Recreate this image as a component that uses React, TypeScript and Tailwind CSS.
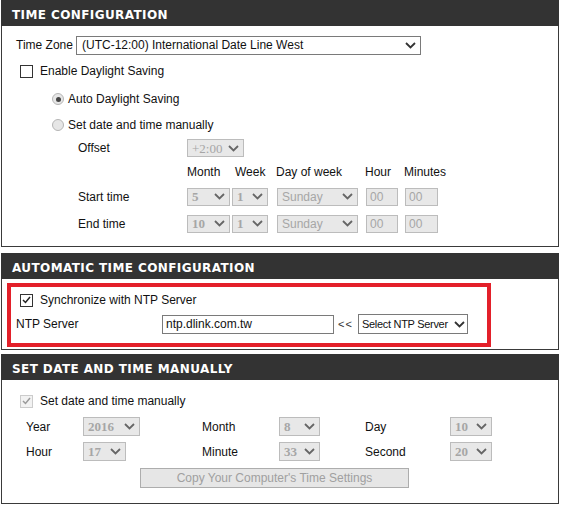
import React from "react";

const Chevron = ({ color = "#333333" }: { color?: string }) => (
  <svg width="11" height="7" viewBox="0 0 11 7" className="shrink-0">
    <path d="M1 1 L5.5 5.5 L10 1" stroke={color} strokeWidth="1.8" fill="none" />
  </svg>
);

const Panel = ({
  title,
  bodyClass,
  children,
}: {
  title: string;
  bodyClass: string;
  children: React.ReactNode;
}) => (
  <div className="ml-[1px] w-[558px]">
    <div className="flex h-[26px] items-center bg-[#333333] pl-[11px] pt-[3px] font-['DejaVu_Sans',sans-serif] text-[12px] font-bold tracking-[0.4px] text-white">
      {title}
    </div>
    <div className={"border-x border-b border-[#3a3a3a] bg-white " + bodyClass}>{children}</div>
  </div>
);

const DisSelect = ({
  value,
  className,
  serif = true,
  bold = true,
}: {
  value: string;
  className: string;
  serif?: boolean;
  bold?: boolean;
}) => (
  <div
    className={
      "flex items-center justify-between border border-[#bcbcbc] bg-[#e8e8e8] pl-[4px] pr-[4px] text-[#a6a6a6] " +
      (serif ? "font-['Liberation_Serif',serif] text-[13px] " : "text-[12px] ") +
      (bold ? "font-bold " : "") +
      className
    }
  >
    <span className="leading-none">{value}</span>
    <Chevron color="#666666" />
  </div>
);

const DisInput = ({ value, className }: { value: string; className: string }) => (
  <div
    className={
      "flex items-center border border-[#bcbcbc] bg-[#e8e8e8] pl-[3px] text-[12px] text-[#a6a6a6] " + className
    }
  >
    {value}
  </div>
);

const Checkbox = ({ checked, disabled }: { checked?: boolean; disabled?: boolean }) => (
  <div
    className={
      "flex h-[13px] w-[13px] shrink-0 items-center justify-center border " +
      (disabled ? "border-[#cccccc] bg-[#f2f2f2]" : "border-[#333333] bg-white")
    }
  >
    {checked && (
      <svg width="9" height="8" viewBox="0 0 9 8">
        <path
          d="M1 4 L3.5 6.5 L8 1"
          stroke={disabled ? "#9a9a9a" : "#222222"}
          strokeWidth="1.5"
          fill="none"
        />
      </svg>
    )}
  </div>
);

const Radio = ({ checked }: { checked?: boolean }) => (
  <div className="flex h-[12px] w-[12px] shrink-0 items-center justify-center rounded-full border border-[#b5b5b5] bg-[#e6e6e6]">
    {checked && <div className="h-[5px] w-[5px] rounded-full bg-[#444444]" />}
  </div>
);

export default function App() {
  return (
    <div className="min-h-[507px] w-[562px] whitespace-nowrap bg-white font-['Liberation_Sans',Arial,sans-serif] text-[12px] text-[#111111]">
      <Panel title="TIME CONFIGURATION" bodyClass="h-[221px] pt-[10px]">
        {/* time zone */}
        <div className="flex h-[18px] items-center pl-[14px]">
          <span className="w-[60px]">Time Zone</span>
          <div className="flex h-[19px] w-[345px] items-center justify-between border border-[#7a7a7a] bg-white pl-[5px] pr-[4px]">
            <span>(UTC-12:00) International Date Line West</span>
            <Chevron />
          </div>
        </div>
        <div className="flex h-[34px] items-center pl-[18px]">
          <Checkbox />
          <span className="ml-[7px]">Enable Daylight Saving</span>
        </div>
        <div className="flex h-[22px] items-center pl-[50px]">
          <Radio checked />
          <span className="ml-[4px]">Auto Daylight Saving</span>
        </div>
        <div className="flex h-[29px] items-center pl-[50px]">
          <Radio />
          <span className="ml-[4px]">Set date and time manually</span>
        </div>
        <div className="flex h-[18px] items-center pl-[76px]">
          <span className="w-[109px]">Offset</span>
          <DisSelect value="+2:00" bold={false} className="h-[18px] w-[57px]" />
        </div>
        <div className="flex h-[30px] items-center pl-[185px]">
          <span className="w-[48px]">Month</span>
          <span className="w-[41px]">Week</span>
          <span className="w-[89px]">Day of week</span>
          <span className="w-[39px]">Hour</span>
          <span>Minutes</span>
        </div>
        {[
          { label: "Start time", month: "5", mt: "" },
          { label: "End time", month: "10", mt: "mt-[8px]" },
        ].map((r) => (
          <div key={r.label} className={"flex h-[19px] items-center pl-[76px] " + r.mt}>
            <span className="w-[109px]">{r.label}</span>
            <DisSelect value={r.month} className="h-[18px] w-[43px]" />
            <DisSelect value="1" className="ml-[2px] h-[18px] w-[36px]" />
            <DisSelect value="Sunday" serif={false} bold={false} className="ml-[9px] h-[18px] w-[81px]" />
            <DisInput value="00" className="ml-[8px] h-[18px] w-[32px]" />
            <DisInput value="00" className="ml-[7px] h-[18px] w-[33px]" />
          </div>
        ))}
      </Panel>

      <div className="mt-[6px]">
        <Panel title="AUTOMATIC TIME CONFIGURATION" bodyClass="h-[71px] pt-[4px] pl-[5px]">
          <div className="h-[64px] w-[484px] border-4 border-[#e3202a]">
            <div className="flex h-[26px] items-center pl-[9px]">
              <Checkbox checked />
              <span className="ml-[7px]">Synchronize with NTP Server</span>
            </div>
            <div className="flex h-[22px] items-center pl-[5px]">
              <span className="w-[146px]">NTP Server</span>
              <div className="flex h-[19px] w-[172px] items-center border border-[#7a7a7a] bg-white pl-[3px]">
                ntp.dlink.com.tw
              </div>
              <span className="ml-[4px] w-[20px] text-[11px] tracking-[1px] text-[#333333]">&lt;&lt;</span>
              <div className="flex h-[20px] w-[110px] items-center justify-between border border-[#7a7a7a] bg-white pl-[3px] pr-[2px]">
                <span className="text-[11px] tracking-[-0.3px]">Select NTP Server</span>
                <Chevron />
              </div>
            </div>
          </div>
        </Panel>
      </div>

      <div className="mt-[4px]">
        <Panel title="SET DATE AND TIME MANUALLY" bodyClass="h-[124px] pt-[8px]">
          <div className="flex h-[26px] items-center pl-[18px]">
            <Checkbox checked disabled />
            <span className="ml-[7px]">Set date and time manually</span>
          </div>
          {[
            { a: "Year", av: "2016", aw: "w-[57px]", b: "Month", bv: "8", c: "Day", cv: "10", mt: "mt-[3px]" },
            { a: "Hour", av: "17", aw: "w-[43px]", b: "Minute", bv: "33", c: "Second", cv: "20", mt: "mt-[6px]" },
          ].map((r) => (
            <div key={r.a} className={"flex h-[19px] items-center pl-[24px] " + r.mt}>
              <span className="w-[57px]">{r.a}</span>
              <div className="w-[119px]">
                <DisSelect value={r.av} className={"h-[19px] " + r.aw} />
              </div>
              <span className="w-[77px]">{r.b}</span>
              <div className="w-[86px]">
                <DisSelect value={r.bv} className="h-[19px] w-[41px]" />
              </div>
              <span className="w-[85px]">{r.c}</span>
              <DisSelect value={r.cv} className="h-[19px] w-[42px]" />
            </div>
          ))}
          <div className="ml-[138px] mt-[7px] flex h-[20px] w-[269px] items-center justify-center border border-[#adadad] bg-[#e6e6e6] text-[#a0a0a0]">
            Copy Your Computer's Time Settings
          </div>
        </Panel>
      </div>
    </div>
  );
}
